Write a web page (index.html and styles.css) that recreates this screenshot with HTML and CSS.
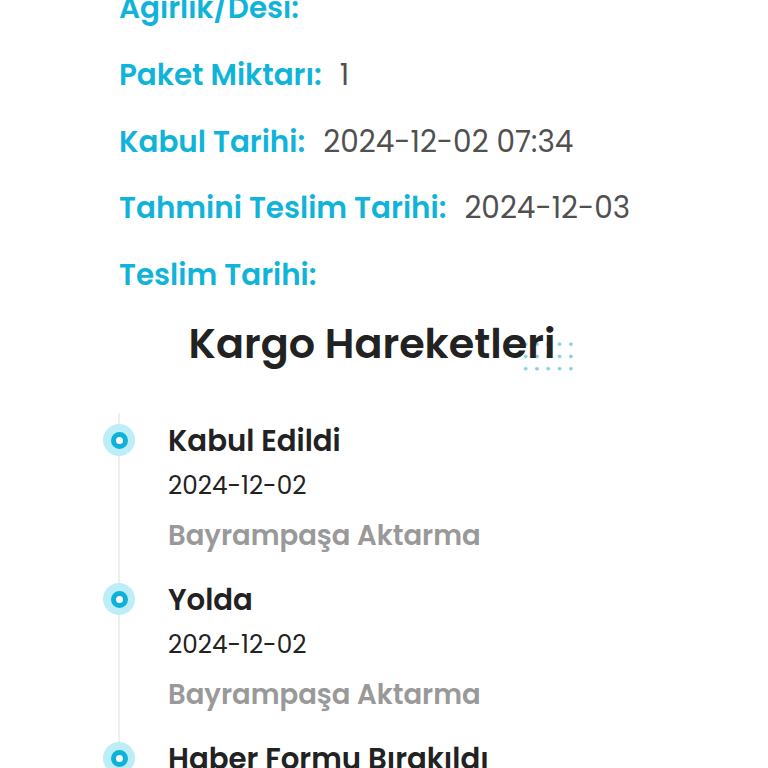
FILE: index.html
```html
<!DOCTYPE html>
<html lang="tr">
<head>
<meta charset="utf-8">
<link rel="stylesheet" href="styles.css">
</head>
<body>
<div class="page">
  <div class="info">
    <div class="row"><span class="label">Ağirlik/Desi:</span></div>
    <div class="row"><span class="label">Paket Miktarı:</span><span class="value">1</span></div>
    <div class="row"><span class="label">Kabul Tarihi:</span><span class="value">2024-12-02 07:34</span></div>
    <div class="row"><span class="label">Tahmini Teslim Tarihi:</span><span class="value">2024-12-03</span></div>
    <div class="row"><span class="label">Teslim Tarihi:</span></div>
  </div>
  <div class="heading-wrap">
    <h2 class="heading"><span class="dots"></span><span class="heading-text">Kargo Hareketleri</span></h2>
  </div>
  <div class="timeline">
    <div class="item">
      <span class="marker"></span>
      <div class="t-title">Kabul Edildi</div>
      <div class="t-date">2024-12-02</div>
      <div class="t-loc">Bayrampaşa Aktarma</div>
    </div>
    <div class="item">
      <span class="marker"></span>
      <div class="t-title">Yolda</div>
      <div class="t-date">2024-12-02</div>
      <div class="t-loc">Bayrampaşa Aktarma</div>
    </div>
    <div class="item">
      <span class="marker"></span>
      <div class="t-title">Haber Formu Bırakıldı</div>
      <div class="t-date">2024-12-02</div>
      <div class="t-loc">Bayrampaşa Aktarma</div>
    </div>
  </div>
</div>
</body>
</html>
```
FILE: styles.css
```css
html, body {
  margin: 0;
  padding: 0;
  background: #ffffff;
  overflow: hidden;
}
body {
  font-family: "Poppins", "Inter", "DejaVu Sans", sans-serif;
}
.page {
  margin-top: -25px;
}
.info {
  padding-left: 119px;
}
.row {
  height: 66.7px;
  display: flex;
  align-items: center;
  gap: 18px;
}
.label {
  color: #10b4d9;
  font-weight: 600;
  font-size: 29.4px;
}
.value {
  color: #505050;
  font-weight: 400;
  font-size: 29.5px;
}
.heading-wrap {
  height: 72px;
  padding-right: 24px;
  display: flex;
  align-items: center;
  justify-content: center;
}
.heading {
  position: relative;
  margin: 0;
  font-size: 41.3px;
  font-weight: 600;
  color: #222222;
  line-height: 50px;
}
.heading-text {
  position: relative;
}
.dots {
  position: absolute;
  right: -22px;
  top: 19px;
  width: 57px;
  height: 37px;
  background-image: radial-gradient(circle at center, #86d0df 0, #86d0df 1.5px, rgba(134, 208, 223, 0) 2.1px);
  background-size: 11.3px 12.3px;
}
.timeline {
  margin-top: 33px;
  margin-left: 118px;
  border-left: 2px solid #eeeeee;
  padding-top: 8px;
  padding-left: 48px;
}
.item {
  position: relative;
  padding-bottom: 19px;
}
.marker {
  position: absolute;
  left: -65px;
  top: 3px;
  width: 32px;
  height: 32px;
  border-radius: 50%;
  background: #bdedf7;
  display: flex;
  align-items: center;
  justify-content: center;
}
.marker::after {
  content: "";
  width: 7px;
  height: 7px;
  border-radius: 50%;
  border: 5px solid #0cb2d7;
  background: #ffffff;
}
.t-title {
  height: 40px;
  line-height: 40px;
  font-size: 29.2px;
  font-weight: 600;
  color: #222222;
}
.t-date {
  height: 50px;
  line-height: 50px;
  font-size: 24.7px;
  font-weight: 400;
  color: #222222;
}
.t-loc {
  height: 50px;
  line-height: 50px;
  font-size: 27.5px;
  font-weight: 600;
  color: #999999;
}
```
